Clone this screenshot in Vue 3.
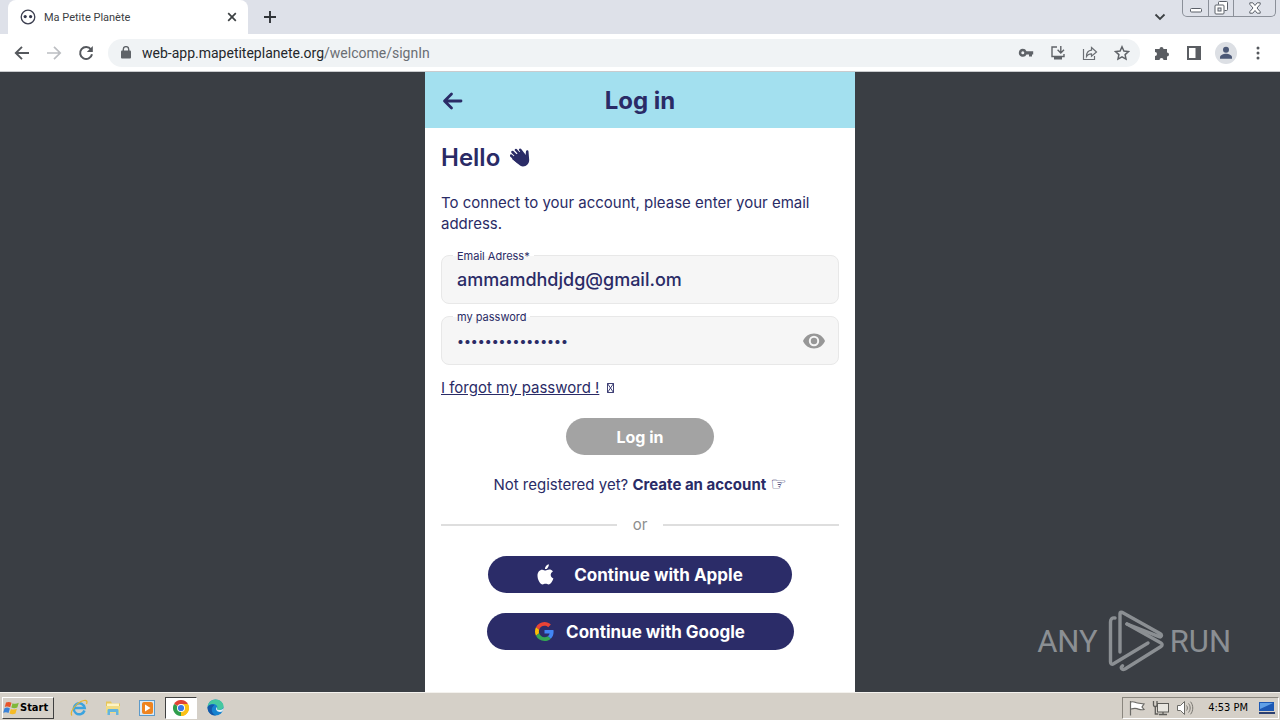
<script setup>
import { ref } from 'vue'

const email = ref('ammamdhdjdg@gmail.om')
const password = ref('abcdefghijklmnop')
const shown = ref(false)
</script>

<template>
  <div class="screen">
    <header class="tabs">
      <div class="tab">
        <svg class="fav" viewBox="0 0 16 16"><circle cx="8" cy="8" r="6.8" fill="#fff" stroke="#3c3f50" stroke-width="1.3" /><circle cx="5.2" cy="7.6" r="1.6" fill="#33364a" /><circle cx="10.6" cy="7.6" r="1.6" fill="#33364a" /></svg>
        <span class="tab-title">Ma Petite Planète</span>
        <button class="icon-btn" aria-label="Close tab"><svg width="10" height="10" viewBox="0 0 10 10"><path d="M1.2 1.2l7.6 7.6M8.8 1.2L1.2 8.8" stroke="#3c4043" stroke-width="1.7" /></svg></button>
      </div>
      <button class="icon-btn new" aria-label="New tab"><svg width="14" height="14" viewBox="0 0 14 14"><path d="M7 1v12M1 7h12" stroke="#303338" stroke-width="1.9" /></svg></button>
      <div class="spacer"></div>
      <button class="icon-btn chevron" aria-label="Search tabs"><svg width="12" height="12" viewBox="0 0 12 12"><path d="M1.500 3.500L6 8l4.500-4.500" fill="none" stroke="#3c4043" stroke-width="1.8" /></svg></button>
      <div class="win">
        <button aria-label="Minimize"><svg width="14" height="14" viewBox="0 0 14 14"><rect x="1.500" y="7.500" width="11" height="3.500" rx="1" fill="#fff" stroke="#5b6069" /></svg></button>
        <button aria-label="Restore"><svg width="14" height="14" viewBox="0 0 14 14"><path d="M4.500 3.500v-2a1 1 0 0 1 1-1h7a1 1 0 0 1 1 1v7a1 1 0 0 1-1 1h-2" fill="#fff" stroke="#5b6069" /><rect x="1" y="4" width="9" height="9" rx="1" fill="#fff" stroke="#5b6069" /><rect x="4" y="7" width="3" height="3" fill="#dee1e9" stroke="#5b6069" /></svg></button>
        <button class="wide" aria-label="Close"><svg width="12" height="12" viewBox="0 0 12 12"><path d="M.8.800h3L6 3.500 8.200.8h3v1.500L8 6l3.200 3.700v1.500h-3L6 8.500l-2.200 2.700h-3V9.700L4 6 .8 2.300z" fill="#fff" stroke="#5b6069" /></svg></button>
      </div>
    </header>

    <nav class="toolbar" aria-label="Browser">
      <button class="icon-btn" aria-label="Back"><svg width="16" height="16" viewBox="0 0 16 16"><path d="M15 8H2M8 1.800L1.800 8 8 14.200" fill="none" stroke="#55585d" stroke-width="1.900" /></svg></button>
      <button class="icon-btn" aria-label="Forward"><svg width="16" height="16" viewBox="0 0 16 16"><path d="M1 8h13M8 1.800L14.200 8 8 14.200" fill="none" stroke="#bcbec2" stroke-width="1.700" /></svg></button>
      <button class="icon-btn" aria-label="Reload"><svg width="16" height="16" viewBox="0 0 16 16"><path d="M13 4.500A6 6 0 1 0 14 9.300" fill="none" stroke="#55585d" stroke-width="2" /><path d="M14.800 1v6H8.800z" fill="#55585d" /></svg></button>
      <div class="omni">
        <svg class="lock" width="10" height="13" viewBox="0 0 10 13"><rect y="4.500" width="10" height="8" rx="1" fill="#5f6368" /><path d="M2.300 5V3.300a2.700 2.700 0 0 1 5.400 0V5" fill="none" stroke="#5f6368" stroke-width="1.400" /></svg>
        <span class="url">web-app.mapetiteplanete.org<i>/welcome/signIn</i></span>
        <button class="icon-btn" aria-label="Passwords"><svg width="16" height="16" viewBox="0 0 16 16"><path fill-rule="evenodd" d="M4.800 3.800a4 4 0 0 1 3.700 2.400h6.700v3.200H14v2h-3v-2H8.500A4 4 0 1 1 4.800 3.800zm0 2.500a1.500 1.500 0 1 0 0 3 1.500 1.500 0 0 0 0-3z" fill="#5f6368" /></svg></button>
        <button class="icon-btn" aria-label="Install"><svg width="16" height="16" viewBox="0 0 16 16"><path d="M7 2H2v9.500h12V9" fill="none" stroke="#5f6368" stroke-width="1.400" /><path d="M4 12h8v2.500H4z" fill="#5f6368" /><path d="M10.800 1v6.500M7.600 4.800l3.200 3.200L14 4.800" fill="none" stroke="#5f6368" stroke-width="1.400" /></svg></button>
        <button class="icon-btn" aria-label="Share"><svg width="16" height="16" viewBox="0 0 16 16"><path d="M1.500 4v10.500h11V11M9.500 2.500L14.500 7l-5 4.300V8.800C7 8.800 5.500 9.700 4.500 11.500c0-3.500 1.800-6 5-6.300z" fill="none" stroke="#6b6f74" stroke-width="1.200" /></svg></button>
        <button class="icon-btn" aria-label="Bookmark"><svg width="16" height="16" viewBox="0 0 16 16"><path d="M8 1.800l1.900 4.200 4.600.5-3.400 3.100.9 4.500L8 11.800l-4 2.300.9-4.500-3.400-3.100 4.600-.5z" fill="none" stroke="#5f6368" stroke-width="1.500" /></svg></button>
      </div>
      <button class="icon-btn" aria-label="Extensions"><svg width="16" height="16" viewBox="0 0 16 16"><path d="M2 4h3.500a2 2 0 1 1 4 0H13v3.500a2 2 0 1 1 0 4V15H9.500a2 2 0 0 0-4 0H1v-4a2 2 0 0 0 0-4V4z" fill="#5a5d62" /></svg></button>
      <button class="icon-btn" aria-label="Side panel"><svg width="16" height="16" viewBox="0 0 16 16"><path fill-rule="evenodd" d="M1 1h14v14H1zm2 2v10h6.500V3z" fill="#5a5d62" /></svg></button>
      <button class="icon-btn avatar" aria-label="Profile"><svg width="22" height="22" viewBox="0 0 22 22"><circle cx="11" cy="11" r="11" fill="#dcdfe4" /><circle cx="11" cy="7.700" r="3" fill="#4b5876" /><path d="M5 16.800v-1.500c0-2.300 3.500-3.500 6-3.500s6 1.200 6 3.500v1.500z" fill="#4b5876" /></svg></button>
      <button class="icon-btn" aria-label="Menu"><svg width="16" height="16" viewBox="0 0 16 16" fill="#55585d"><circle cx="8" cy="3" r="1.500" /><circle cx="8" cy="8" r="1.500" /><circle cx="8" cy="13" r="1.500" /></svg></button>
    </nav>

    <div class="page">
      <main class="card">
        <div class="bar">
          <button class="back" aria-label="Go back"><svg width="22" height="20" viewBox="0 0 22 20"><path d="M20 10H4M10.500 3L3.500 10l7 7" fill="none" stroke="#2a2b66" stroke-width="2.800" stroke-linecap="round" stroke-linejoin="round" /></svg></button>
          <h1>Log in</h1>
        </div>
        <form class="body" @submit.prevent>
          <h2>Hello
            <svg width="20" height="20" viewBox="0 0 20 20"><path d="M1 7.500l7 6.500M2.500 4l8 8M6 2l8 9M10.200 1.800L15 8" stroke="#2a2b66" stroke-width="2.500" stroke-linecap="round" /><path d="M4 8l7-5 4.500 4.700.5-4.500c.3-1.600 2.500-1.300 2.500.4l.7 8.400c0 3.500-2.500 6.500-6.200 6.500-2 0-3.300-1-4.500-2.200L2 11z" fill="#2a2b66" /></svg>
          </h2>
          <p class="intro">To connect to your account, please enter your email address.</p>
          <div class="field">
            <label for="email">Email Adress*</label>
            <input id="email" v-model="email" type="email" />
          </div>
          <div class="field">
            <label for="pass">my password</label>
            <input id="pass" v-model="password" class="secret" :type="shown ? 'text' : 'password'" />
            <button type="button" class="eye" aria-label="Show password" @click="shown = !shown"><svg width="22" height="16" viewBox="0 0 22 16"><path d="M11 .5C6 .5 1.800 3.500 0 8c1.800 4.500 6 7.500 11 7.500S20.200 12.500 22 8C20.200 3.500 16 .5 11 .5z" fill="#979797" /><circle cx="11" cy="8" r="4.200" fill="#979797" stroke="#f6f6f6" stroke-width="2" /></svg></button>
          </div>
          <div class="forgot"><a href="#">I forgot my password !</a><svg width="7" height="10" viewBox="0 0 7 10"><path d="M.5.500h6v9h-6zM.5.500l6 9M6.500.500l-6 9" fill="none" stroke="#2a2b66" stroke-width=".9" /></svg></div>
          <button class="pill login">Log in</button>
          <p class="register">Not registered yet? <a href="#"><b>Create an account</b> <span class="hand">☞</span></a></p>
          <div class="or"><span>or</span></div>
          <button type="button" class="pill social apple"><svg width="17" height="21" viewBox="0 0 17 21" fill="#fff"><path d="M11.800.3c.2 1.400-.4 2.700-1.200 3.600-.7.900-1.700 1.300-2.600 1.200-.1-1.300.5-2.500 1.200-3.300.8-.9 1.700-1.400 2.600-1.500zM15.900 7.400c-1.500.9-2.200 2-2.200 3.400 0 1.800 1 3 2.700 3.700-.4 1.500-1.100 2.800-2 4-.8 1.100-1.600 1.900-2.800 1.900-1.200 0-1.600-.7-3-.7s-1.900.7-3 .7c-1.300 0-2.300-1.100-3.200-2.500C1 15.800.5 13.500.5 11.500c0-3.500 2.200-5.800 4.800-5.800 1.400 0 2.300.8 3.300.8s2-.9 3.700-.9c1.400 0 2.700.6 3.600 1.800z" /></svg>Continue with Apple</button>
          <button type="button" class="pill social google"><svg width="19" height="19" viewBox="0 0 48 48"><path fill="#EA4335" d="M24 9.500c3.540 0 6.710 1.220 9.210 3.600l6.850-6.850C35.900 2.380 30.470 0 24 0 14.620 0 6.510 5.380 2.560 13.220l7.980 6.190C12.430 13.720 17.740 9.500 24 9.500z" /><path fill="#4285F4" d="M46.980 24.550c0-1.570-.15-3.090-.38-4.550H24v9.020h12.940c-.58 2.960-2.260 5.480-4.780 7.180l7.730 6c4.510-4.180 7.090-10.360 7.090-17.650z" /><path fill="#FBBC05" d="M10.530 28.590c-.48-1.450-.76-2.990-.76-4.590s.27-3.140.76-4.590l-7.980-6.190C.92 16.460 0 20.120 0 24c0 3.880.92 7.540 2.560 10.780l7.970-6.190z" /><path fill="#34A853" d="M24 48c6.480 0 11.930-2.130 15.890-5.810l-7.730-6c-2.150 1.450-4.920 2.300-8.160 2.300-6.260 0-11.570-4.220-13.470-9.910l-7.980 6.190C6.510 42.620 14.620 48 24 48z" /></svg>Continue with Google</button>
        </form>
      </main>
      <div class="mark">
        <span>ANY</span>
        <svg width="56" height="62" viewBox="0 0 56 62" fill="none" stroke="#8b8f93" stroke-width="3.400" stroke-linejoin="round" stroke-linecap="round"><path d="M12 42V3.500c0-1.200 1-1.700 2-1.200L52 23.500c2.500 1.700 1.500 4-1 3.200L19 14" /><path d="M7 8C4 7.500 2.500 9 2.500 12v40c0 2 1.500 2.800 3 1.800L40 33" /><path d="M19 14L53 33c1.500.9 1.500 2.500 0 3.500L17 59c-3 1.500-5-1.200-2.500-3.200" /></svg>
        <span>RUN</span>
      </div>
    </div>

    <footer class="taskbar">
      <button class="start"><svg width="17" height="16" viewBox="0 0 17 16"><path d="M3 2.500c2-1 4-.7 5.500.2L7.200 7.300C5.500 6.400 3.700 6.300 1.800 7z" fill="#e8542a" /><path d="M9.500 3.200c2 .9 4 .7 6.300-.4l-1.500 4.800c-2 .9-4 .9-6 0z" fill="#7fb83a" /><path d="M1.500 8.200c2-.9 3.700-.7 5.400.2l-1.400 4.700C4 12 2.200 12 .2 12.800z" fill="#3a82d8" /><path d="M7.900 8.900c2 .9 4 .8 6-.2l-1.400 4.800c-2 1-4 .9-6 .1z" fill="#f6bb25" /></svg>Start</button>
      <button class="task" aria-label="Internet Explorer"><svg width="18" height="18" viewBox="0 0 18 18"><path d="M14.500 11.500A5.500 5.500 0 1 1 14.700 9H5" fill="none" stroke="#3ba3df" stroke-width="2.500" /><path d="M2 16.500C-1 13 7 3 14 1.500c3-.5 3.500 1 2.500 3.500" fill="none" stroke="#e5b52f" stroke-width="1.200" /></svg></button>
      <button class="task" aria-label="Explorer"><svg width="18" height="18" viewBox="0 0 18 18"><path d="M2 2.500h5l1 2h8V14H2z" fill="#e7c65a" /><path d="M3 4.500h12V11H3z" fill="#fdf3c5" /><path d="M2 7h14v7H2z" fill="#f1dc85" /><path d="M3.500 16v-4.500c0-1 .5-1.500 1.500-1.500h8c1 0 1.500.5 1.500 1.500V16H12v-3H6v3z" fill="#63b5de" /></svg></button>
      <button class="task" aria-label="Media Player"><svg width="18" height="18" viewBox="0 0 18 18"><rect x="1.500" y="1.500" width="15" height="15" fill="#d9eaf7" stroke="#5d9ac9" /><rect x="4" y="3" width="11" height="12" rx="2" fill="#ee8420" /><path d="M7 5.500v7L12.500 9z" fill="#fff" /></svg></button>
      <button class="task active" aria-label="Chrome"><svg width="16" height="16" viewBox="0 0 16 16"><path d="M8 8L1.070 4A8 8 0 0 1 14.930 4z" fill="#e04335" /><path d="M8 8l6.930-4A8 8 0 0 1 8 16z" fill="#fbc116" /><path d="M8 8v8A8 8 0 0 1 1.070 4z" fill="#2f9e4c" /><path d="M8 4h6.930A8 8 0 0 1 8 16l3.500-6z" fill="#fbc116" /><circle cx="8" cy="8" r="4" fill="#fff" /><circle cx="8" cy="8" r="3.100" fill="#3b78e7" /></svg></button>
      <button class="task" aria-label="Edge"><svg width="17" height="17" viewBox="0 0 17 17"><circle cx="8.500" cy="8.500" r="8" fill="#1683d0" /><path d="M.5 8C1 3.500 4.500.500 8.500.500c5 0 8 3.500 8 6.500 0 3-2.500 4-4.500 4s-2.700-.8-2-1.700C11.500 6.500 8 4.500 5 5 2.500 5.400 1 6.700.5 8z" fill="#45c8a0" /><path d="M6 7.500C3.500 10 5 15 9 16.500 4 17 .5 13 .5 8.500 1 6 5 5 7.500 6z" fill="#1458a8" /><path d="M9.500 8c-1.500 3 1 6 6 4.500l1-3c-1.500 1.500-3 1.500-4.500 1.500s-2.700-.8-2-1.700z" fill="#e2f1f7" /></svg></button>
      <div class="spacer"></div>
      <div class="tray">
        <svg width="18" height="16" viewBox="0 0 18 16"><path d="M2.500 1v14.500M3 2c3-1 4 .8 6.500 1L16 4l-2 3 2 2.500c-3 .8-5-.3-7-.8S5 8.500 3 9" fill="#fff" stroke="#6b6a66" stroke-width="1.200" /></svg>
        <svg width="18" height="16" viewBox="0 0 18 16"><rect x="5.500" y="3.500" width="11" height="8.500" fill="#e8e6e0" stroke="#5d5c58" /><path d="M7 14.500h8M11 12v2.500M1.500 1v4c0 2 3.500 2 3.500 0V1M3.300 6.500V14h3" fill="none" stroke="#5d5c58" stroke-width="1.300" /></svg>
        <svg width="18" height="16" viewBox="0 0 18 16"><path d="M1.500 5.500h3L8.500 1.500v13l-4-4h-3z" fill="#fff" stroke="#6b6a66" /><path d="M10.500 5.500c1.200 1.500 1.200 3.500 0 5M12.500 3.500c2.200 2.500 2.200 6.500 0 9M14.500 1.700c3 3.700 3 9 0 12.600" fill="none" stroke="#77756f" /></svg>
        <time>4:53 PM</time>
        <svg width="16" height="14" viewBox="0 0 16 14"><path d="M0 1h15v9H0z" fill="#1c58b4" /><path d="M1 2h13L1 8z" fill="#5f9fe6" /><path d="M0 11h16v2H0z" fill="#2b3f70" /></svg>
      </div>
    </footer>
  </div>
</template>

<style>
body { margin: 0; }
</style>

<style scoped>
* { box-sizing: border-box; }
button { margin: 0; padding: 0; border: 0; background: none; font: inherit; color: inherit; }
svg { display: block; flex: none; }
a { color: inherit; }
.screen { display: flex; flex-direction: column; min-height: 100vh; font-family: "DejaVu Sans Condensed", "DejaVu Sans", sans-serif; }
.spacer { flex: 1; }
.icon-btn { display: grid; place-items: center; flex: none; }
.tabs { display: flex; align-items: flex-end; height: 34px; background: #dee1e9; padding: 0 4px 0 8px; }
.tab { display: flex; align-items: center; gap: 8px; width: 240px; height: 34px; padding: 0 11px 0 12px; background: #fff; border-radius: 8px 8px 0 0; }
.fav { width: 16px; height: 16px; }
.tab-title { flex: 1; font: 11px Roboto, sans-serif; color: #3c4043; }
.new { width: 28px; height: 34px; margin-left: 8px; }
.chevron { width: 24px; height: 34px; margin-right: 10px; }
.win { display: flex; align-self: flex-start; height: 17px; border: 1px solid #8b9099; border-top: 0; border-radius: 0 0 5px 5px; }
.win button { display: grid; place-items: center; width: 25px; }
.win button + button { border-left: 1px solid #8b9099; }
.win .wide { width: 42px; }
.toolbar { display: flex; align-items: center; gap: 16px; height: 38px; padding: 0 14px; background: #fff; border-bottom: 1px solid #c9cbce; }
.toolbar > .icon-btn { width: 16px; }
.avatar svg { margin: 0 -3px; }
.omni { flex: 1; display: flex; align-items: center; gap: 16px; height: 28px; margin: 0 -2px; padding: 0 10px 0 13px; background: #f0f3f5; border-radius: 14px; }
.lock { margin-right: -5px; }
.url { flex: 1; font: 14px Roboto, sans-serif; color: #24272b; }
.url i { font-style: normal; color: #6a6e73; }
.page { position: relative; flex: 1; display: flex; justify-content: center; background: #3a3e44; }
.card { width: 430px; max-width: 100%; background: #fff; color: #2a2b66; font-family: Inter, sans-serif; }
.bar { display: grid; grid-template-columns: 1fr auto 1fr; align-items: center; height: 56px; padding: 2px 16px 0; background: #a3e0ef; }
.back { justify-self: start; }
h1 { margin: 0; font-size: 24px; font-weight: 700; line-height: 32px; }
.body { display: flex; flex-direction: column; padding: 12px 16px 40px; }
h2 { display: flex; align-items: center; gap: 10px; margin: 0; font-size: 24px; font-weight: 600; line-height: 36px; }
.intro { margin: 16px 0 21px; font-size: 15px; line-height: 21px; }
.field { position: relative; display: flex; align-items: center; height: 49px; margin-bottom: 12px; border: 1px solid #e8e8e8; border-radius: 8px; background: #f6f6f6; }
.field label { position: absolute; left: 11px; top: -7px; padding: 0 4px; font-size: 11px; line-height: 14px; background: linear-gradient(#fff 50%, #f6f6f6 50%); }
.field input { flex: 1; min-width: 0; height: 46px; padding: 0 15px; border: 0; outline: 0; background: none; font: 500 18px Inter, sans-serif; color: #2a2b66; }
.field .secret { font-size: 13px; }
.eye { margin-right: 13px; }
.forgot { display: flex; align-items: center; gap: 8px; font-size: 15px; line-height: 21px; }
.pill { display: flex; align-items: center; justify-content: center; align-self: center; height: 37px; border-radius: 19px; color: #fff; font-size: 17px; font-weight: 700; }
.login { width: 148px; margin-top: 20px; font-size: 16px; background: #a3a3a3; }
.register { margin: 19px 0; text-align: center; font-size: 15px; line-height: 21px; }
.register a { text-decoration: none; }
.hand { font: 18px/16px "DejaVu Sans", sans-serif; }
.or { display: flex; align-items: center; gap: 16px; font-size: 15px; line-height: 21px; color: #8e8e8e; }
.or::before, .or::after { content: ""; flex: 1; height: 2px; background: #dedede; }
.social { background: #2b2c68; }
.apple { width: 304px; margin-top: 21px; gap: 20px; }
.google { width: 307px; margin-top: 20px; gap: 12px; }
.mark { position: absolute; right: 49px; bottom: 20px; display: flex; align-items: center; gap: 6px; color: #8b8f93; font: 31px Roboto, sans-serif; }
.mark svg { margin-left: 4px; }
.taskbar { display: flex; align-items: center; height: 28px; padding: 2px 1px 0 2px; background: #d5d0c8; border-top: 1px solid #f4f2ee; font-size: 11px; color: #000; }
.start { display: flex; align-items: center; height: 22px; width: 52px; margin-right: 9px; border: 1px solid; border-color: #fff #404040 #404040 #fff; font-weight: 700; }
.task { display: grid; place-items: center; width: 32px; height: 22px; margin-right: 2px; }
.active { background: #fff; border: 1px solid; border-color: #404040 #fff #fff #404040; }
.tray { display: flex; align-items: center; gap: 6px; height: 22px; padding: 0 3px 0 5px; border: 1px solid; border-color: #8a867e #fff #fff #8a867e; }
.tray time { margin: 0 5px 0 8px; }
</style>
